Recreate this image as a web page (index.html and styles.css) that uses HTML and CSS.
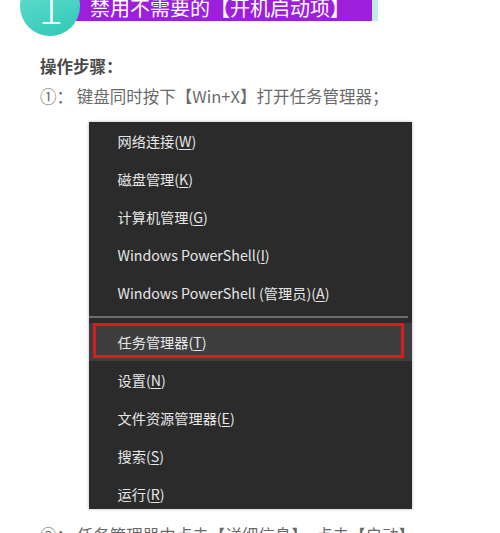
FILE: index.html
```html
<!DOCTYPE html>
<html lang="zh-CN">

<head>
    <meta charset="UTF-8" />
    <meta name="viewport" content="width=device-width, initial-scale=1.0" />
    <title>禁用不需要的开机启动项</title>
    <link rel="stylesheet" href="styles.css">
</head>

<body>
    <div class="page">
        <header class="title">
            <div class="badge">1</div>
            <div class="bar">禁用不需要的【开机启动项】</div>
        </header>

        <p class="label">操作步骤：</p>
        <p class="step">①：&nbsp;键盘同时按下【Win+X】打开任务管理器；</p>

        <div class="shot">
            <ul class="menu">
                <li>网络连接(<u>W</u>)</li>
                <li>磁盘管理(<u>K</u>)</li>
                <li>计算机管理(<u>G</u>)</li>
                <li>Windows PowerShell(<u>I</u>)</li>
                <li>Windows PowerShell (管理员)(<u>A</u>)</li>
                <li class="sep"></li>
                <li class="hl">任务管理器(<u>T</u>)</li>
                <li>设置(<u>N</u>)</li>
                <li>文件资源管理器(<u>E</u>)</li>
                <li>搜索(<u>S</u>)</li>
                <li>运行(<u>R</u>)</li>
            </ul>
        </div>

        <p class="step">②：&nbsp;任务管理器中点击【详细信息】，点击【启动】</p>
    </div>
</body>

</html>
```

FILE: styles.css
```css
:root {
    --text: #6a6a6a;
    --label: #4a4a4a;
    --purple: #9d1fdc;
    --teal-light: #bfece8;
    --menu-bg: #2b2b2b;
    --menu-hl: #3e3e3e;
    --menu-text: #e6e6e6;
    --red: #d21f1f;
    --base-font: "Noto Sans CJK SC", "Noto Sans", sans-serif;
}

html,
body {
    margin: 0;
    padding: 0;
    background: #ffffff;
    font-family: var(--base-font);
    overflow: hidden;
}

.page {
    padding: 0 40px;
}

/* section title */

.title {
    display: flex;
    align-items: flex-start;
    margin: -24px 0 0 -20px;
}

.badge {
    position: relative;
    z-index: 1;
    width: 60px;
    height: 60px;
    flex: none;
    border-radius: 50%;
    background: linear-gradient(160deg, #6be0d2, #2ec8b6);
    color: #ffffff;
    font-family: Lato, "Noto Sans", sans-serif;
    font-weight: 300;
    font-size: 48px;
    line-height: 60px;
    text-align: center;
}

.bar {
    margin-left: -4px;
    height: 45px;
    width: 302px;
    box-sizing: border-box;
    padding: 22px 0 0 14px;
    background: var(--purple);
    border-right: 6px solid var(--teal-light);
    color: #ffffff;
    font-size: 20px;
    line-height: 19px;
    white-space: nowrap;
}

/* text */

.label,
.step {
    margin: 0;
    font-size: 16.5px;
    line-height: 30px;
    color: var(--text);
    white-space: nowrap;
}

.label {
    margin-top: 15px;
    font-weight: bold;
    color: var(--label);
}

/* screenshot of the Win+X menu */

.shot {
    width: 323px;
    height: 387px;
    margin: 11px auto;
    overflow: hidden;
    background: var(--menu-bg);
    box-shadow: 0 0 3px rgba(0, 0, 0, 0.3);
}

.menu {
    list-style: none;
    margin: 0;
    padding: 0;
}

.menu li {
    position: relative;
    height: 38px;
    padding-left: 29px;
    font-size: 14.2px;
    line-height: 38px;
    color: var(--menu-text);
    white-space: nowrap;
}

.menu u {
    text-underline-offset: 2px;
}

.menu .sep {
    height: 7px;
    padding: 0;
}

.menu .sep::before {
    content: "";
    display: block;
    margin: 4px 4px 0 0;
    height: 2px;
    background: #6c6c6c;
}

.menu .hl {
    background: var(--menu-hl);
}

.menu .hl::after {
    content: "";
    position: absolute;
    top: 0;
    left: 4px;
    right: 8px;
    bottom: 3px;
    border: 3px solid var(--red);
}
```
